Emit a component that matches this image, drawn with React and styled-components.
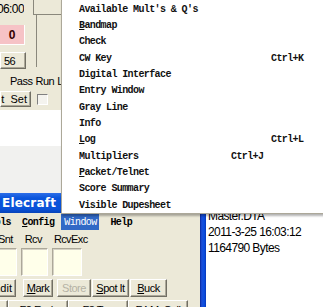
import React from "react";
import styled, { createGlobalStyle } from "styled-components";

const Global = createGlobalStyle`
  html, body { margin: 0; padding: 0; background: #ece9d8; }
  #root { width: 323px; height: 307px; }
`;

const Screen = styled.div`
  position: relative;
  width: 323px;
  height: 307px;
  overflow: hidden;
  background: #ece9d8;
  display: flex;
  flex-direction: column;
  font-family: "Liberation Sans", Arial, sans-serif;
`;

/* ---------- top controls ---------- */
const TopPanel = styled.div`
  height: 110px;
  flex: none;
  display: flex;
  flex-direction: column;
`;
const TopRow = styled.div`
  display: flex;
  height: 72px;
`;
const LeftCol = styled.div`
  width: 33px;
  display: flex;
  flex-direction: column;
`;
const Clock = styled.div`
  height: 17px;
  width: 24px;
  display: flex;
  justify-content: flex-end;
  align-items: center;
  font-size: 12px;
  letter-spacing: -0.6px;
  color: #000;
  overflow: hidden;
  white-space: nowrap;
`;
const PinkBox = styled.div`
  margin-top: 8px;
  width: 25px;
  height: 20px;
  box-sizing: border-box;
  background: #f6c3c6;
  border-right: 1px solid #fff;
  border-bottom: 1px solid #fff;
  display: flex;
  align-items: center;
  justify-content: center;
  font-weight: bold;
  font-size: 12px;
  color: #300;
`;
const WinButton = styled.div`
  box-sizing: border-box;
  height: ${(p) => p.$h || 18}px;
  width: ${(p) => p.$w}px;
  margin-left: ${(p) => p.$ml || 0}px;
  margin-top: ${(p) => p.$mt || 0}px;
  flex: none;
  background: #ece9d8;
  border-top: 1px solid #fff;
  border-left: 1px solid #fff;
  border-right: 1px solid #716f64;
  border-bottom: 1px solid #716f64;
  box-shadow: inset -1px -1px 0 #aca899;
  display: flex;
  align-items: center;
  justify-content: ${(p) => p.$justify || "center"};
  padding-right: ${(p) => p.$pr || 0}px;
  padding-left: ${(p) => p.$pl || 0}px;
  font-size: 11px;
  letter-spacing: ${(p) => (p.$wide ? 0 : -0.5)}px;
  word-spacing: ${(p) => (p.$wide ? 3 : 0)}px;
  color: ${(p) => (p.$disabled ? "#b5b2a5" : "#000")};
  white-space: nowrap;
  overflow: hidden;
`;
const U = styled.span`
  text-decoration: underline;
`;
const Display = styled.div`
  flex: 1;
  display: flex;
  flex-direction: column;
`;
const DisplayHead = styled.div`
  height: 15px;
  box-sizing: border-box;
  border-left: 1px solid #8a887c;
  border-bottom: 1px solid #8a887c;
  display: flex;
  justify-content: flex-end;
  align-items: center;
  font-size: 10px;
  color: #b8b5a8;
  padding-right: 1px;
`;
const DisplayFrame = styled.div`
  margin-left: 3px;
  height: 52px;
  border-left: 1px solid #8a887c;
`;
const LabelLine = styled.div`
  display: flex;
  height: 18px;
  align-items: center;
  font-size: 11px;
  letter-spacing: -0.5px;
  white-space: nowrap;
`;
const Label = styled.span`
  margin-left: ${(p) => p.$ml}px;
`;
const ControlLine = styled.div`
  display: flex;
  align-items: center;
  height: 17px;
  gap: 6px;
`;
const Check = styled.div`
  width: 11px;
  height: 11px;
  box-sizing: border-box;
  border-top: 1px solid #808080;
  border-left: 1px solid #808080;
  border-right: 1px solid #fff;
  border-bottom: 1px solid #fff;
  background: #f4f3ee;
  margin-top: 2px;
`;

/* ---------- strips ---------- */
const Strip = styled.div`
  height: ${(p) => p.$h}px;
  flex: none;
  background: ${(p) => p.$bg};
`;

/* ---------- lower windows ---------- */
const Lower = styled.div`
  flex: 1;
  display: flex;
  min-height: 0;
`;
const LoggerWindow = styled.div`
  width: 206px;
  flex: none;
  display: flex;
  flex-direction: column;
`;
const TitleBar = styled.div`
  height: 20px;
  flex: none;
  background: linear-gradient(#2d6ee8, #0a55dc 25%, #0a52d8 80%, #0844b8);
  color: #fff;
  font-family: "DejaVu Sans", sans-serif;
  font-weight: bold;
  font-size: 12px;
  display: flex;
  align-items: center;
  padding-left: 2px;
  letter-spacing: 0.2px;
`;
const WindowBody = styled.div`
  flex: 1;
  display: flex;
`;
const BodyContent = styled.div`
  flex: 1;
  display: flex;
  flex-direction: column;
  background: #ece9d8;
  overflow: hidden;
`;
const Frame = styled.div`
  width: 6px;
  flex: none;
  background: linear-gradient(90deg, #06249a, #1c4fd8 30%, #0a4ee0 70%, #0836b8);
`;
const MenuBar = styled.div`
  height: 16px;
  display: flex;
  align-items: stretch;
  font-family: "Liberation Mono", monospace;
  font-weight: bold;
  font-size: 10px;
  letter-spacing: -0.6px;
  margin-top: 1px;
  white-space: nowrap;
`;
const MenuBarItem = styled.div`
  display: flex;
  align-items: center;
  margin-left: ${(p) => p.$ml || 0}px;
  width: ${(p) => (p.$w ? p.$w + "px" : "auto")};
  justify-content: ${(p) => (p.$w ? "center" : "flex-start")};
  background: ${(p) => (p.$active ? "#3169c6" : "transparent")};
  color: ${(p) => (p.$active ? "#fff" : "#000")};
  font-weight: ${(p) => (p.$active ? "normal" : "bold")};
`;
const FieldLabels = styled.div`
  height: 18px;
  display: flex;
  align-items: center;
  font-size: 11px;
  letter-spacing: -0.6px;
  white-space: nowrap;
`;
const Fields = styled.div`
  display: flex;
  gap: 4px;
  margin-left: -10px;
`;
const Field = styled.div`
  width: ${(p) => p.$w}px;
  height: 28px;
  box-sizing: border-box;
  background: #ffffea;
  border-top: 1px solid #aca899;
  border-left: 1px solid #aca899;
  border-right: 1px solid #fff;
  border-bottom: 1px solid #fff;
  box-shadow: inset 1px 1px 0 #d6d3c6;
`;
const ButtonRow = styled.div`
  display: flex;
  margin-top: ${(p) => p.$mt}px;
`;

const InfoPanel = styled.div`
  flex: 1;
  background: #fff;
  padding: 15px 0 0 2px;
  font-size: 12px;
  letter-spacing: -0.6px;
  line-height: 16px;
  color: #000;
  white-space: nowrap;
`;

/* ---------- dropdown menu ---------- */
const DropMenu = styled.div`
  position: absolute;
  left: 61px;
  top: -1px;
  width: 280px;
  box-sizing: border-box;
  background: #fff;
  border: 1px solid #aca899;
  padding: 1px 0 0 0;
  box-shadow: 1px 2px 2px rgba(0, 0, 0, 0.3);
  font-family: "Liberation Mono", monospace;
  font-weight: bold;
  font-size: 10px;
  letter-spacing: -0.6px;
  color: #111;
`;
const MenuRow = styled.div`
  height: 16.33px;
  display: grid;
  grid-template-columns: ${(p) => p.$tab}px auto;
  align-items: center;
  padding-left: 17px;
  white-space: pre;
`;

const items = [
  { label: "Available Mult's & Q's" },
  { label: "Bandmap", u: 0 },
  { label: "Check" },
  { label: "CW Key", sc: "Ctrl+K", tab: 192 },
  { label: "Digital Interface" },
  { label: "Entry Window" },
  { label: "Gray Line" },
  { label: "Info" },
  { label: "Log", u: 0, sc: "Ctrl+L", tab: 192 },
  { label: "Multipliers", sc: "Ctrl+J", tab: 152 },
  { label: "Packet/Telnet", u: 0 },
  { label: "Score Summary" },
  { label: "Visible Dupesheet" },
];

function MenuLabel({ label, u }) {
  if (u === undefined) return <span>{label}</span>;
  return (
    <span>
      {label.slice(0, u)}
      <U>{label[u]}</U>
      {label.slice(u + 1)}
    </span>
  );
}

export default function App() {
  return (
    <>
      <Global />
      <Screen>
        <TopPanel>
          <TopRow>
            <LeftCol>
              <Clock>06:00</Clock>
              <PinkBox>0</PinkBox>
              <WinButton $w={26} $h={17} $mt={7} $justify="flex-start" $pl={3}>
                56
              </WinButton>
            </LeftCol>
            <Display>
              <DisplayHead>E</DisplayHead>
              <DisplayFrame />
            </Display>
          </TopRow>
          <LabelLine>
            <Label $ml={10}>Pass</Label>
            <Label $ml={3}>Run</Label>
            <Label $ml={3}>L</Label>
          </LabelLine>
          <ControlLine>
            <WinButton $w={31} $h={16} $justify="flex-end" $pr={3} $wide>
              Not Set
            </WinButton>
            <Check />
          </ControlLine>
        </TopPanel>
        <Strip $h={36} $bg="#ffffff" />
        <Strip $h={47} $bg="#f1f1ef" />
        <Lower>
          <LoggerWindow>
            <TitleBar>Elecraft</TitleBar>
            <WindowBody>
              <BodyContent>
                <MenuBar>
                  <MenuBarItem $ml={-16}>Tools</MenuBarItem>
                  <MenuBarItem $ml={11}>
                    <U>C</U>onfig
                  </MenuBarItem>
                  <MenuBarItem $ml={7} $w={38} $active>
                    Window
                  </MenuBarItem>
                  <MenuBarItem $ml={11}>Help</MenuBarItem>
                </MenuBar>
                <FieldLabels>
                  <Label $ml={-2}>Snt</Label>
                  <Label $ml={12}>Rcv</Label>
                  <Label $ml={12}>RcvExc</Label>
                </FieldLabels>
                <Fields>
                  <Field $w={27} />
                  <Field $w={27} />
                  <Field $w={30} />
                </Fields>
                <ButtonRow $mt={3}>
                  <WinButton $w={34} $ml={-18} $justify="flex-end" $pr={3} $wide>
                    Edit
                  </WinButton>
                  <WinButton $w={30} $ml={7}>
                    <U>M</U>ark
                  </WinButton>
                  <WinButton $w={34} $ml={4} $disabled>
                    Store
                  </WinButton>
                  <WinButton $w={37} $ml={1}>
                    <U>S</U>pot It
                  </WinButton>
                  <WinButton $w={37} $ml={1}>
                    <U>B</U>uck
                  </WinButton>
                </ButtonRow>
                <ButtonRow $mt={3}>
                  <WinButton $w={60} $ml={-52} $h={20}>
                    F1 CQ
                  </WinButton>
                  <WinButton $w={60} $h={20}>F2 Exch</WinButton>
                  <WinButton $w={60} $h={20}>F3 Tnx</WinButton>
                  <WinButton $w={60} $h={20}>F4 MyCall</WinButton>
                </ButtonRow>
              </BodyContent>
              <Frame />
            </WindowBody>
          </LoggerWindow>
          <InfoPanel>
            <div>Master.DTA</div>
            <div>2011-3-25 16:03:12</div>
            <div>1164790 Bytes</div>
          </InfoPanel>
        </Lower>
        <DropMenu>
          {items.map((it) => (
            <MenuRow key={it.label} $tab={it.tab || 200}>
              <MenuLabel label={it.label} u={it.u} />
              {it.sc ? <span>{it.sc}</span> : null}
            </MenuRow>
          ))}
        </DropMenu>
      </Screen>
    </>
  );
}
